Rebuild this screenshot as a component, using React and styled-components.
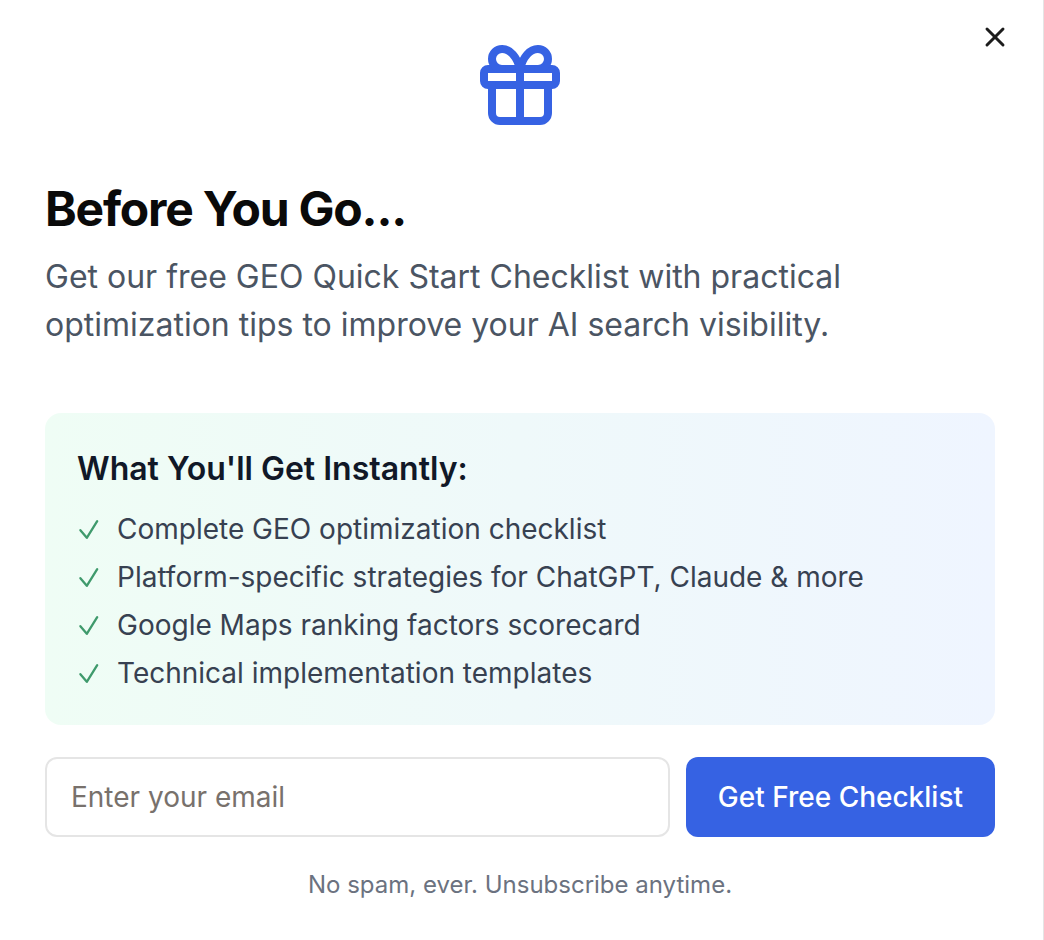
import React from "react";
import styled, { createGlobalStyle } from "styled-components";
import { Gift, X } from "lucide-react";

const GlobalStyle = createGlobalStyle`
  *, *::before, *::after { box-sizing: border-box; }
  body { margin: 0; background: #fff; font-family: Inter, "Liberation Sans", sans-serif; color: #0a0a0a; }
  h2, h3, p, ul { margin: 0; padding: 0; }
`;

const Dialog = styled.main`
  position: relative;
  min-height: 100vh;
  padding: 37px 48px 40px 45px;
  border-right: 1px solid #e5e5e5;
  background: #fff;
`;

const CloseButton = styled.button`
  position: absolute;
  top: 21px;
  right: 32px;
  display: flex;
  padding: 0;
  border: 0;
  background: none;
  color: #1c1c1c;
  cursor: pointer;
`;

const IconRow = styled.div`
  display: flex;
  justify-content: center;
  color: #3662e3;
`;

const Header = styled.header`
  margin-top: 48px;
`;

const Title = styled.h2`
  font-size: 48px;
  line-height: 56px;
  font-weight: 700;
  letter-spacing: -0.025em;
`;

const Description = styled.p`
  max-width: 880px;
  margin-top: 16px;
  font-size: 32px;
  line-height: 48px;
  color: #4b5563;
`;

const Benefits = styled.section`
  margin-top: 64px;
  padding: 32px;
  border-radius: 16px;
  background: linear-gradient(to right, #effdf5, #eff5ff);
`;

const BenefitsTitle = styled.h3`
  font-size: 32px;
  line-height: 48px;
  font-weight: 600;
  color: #111827;
`;

const BenefitList = styled.ul`
  display: grid;
  gap: 8px;
  margin-top: 16px;
  list-style: none;
`;

const Benefit = styled.li`
  display: flex;
  align-items: center;
  gap: 16px;
  font-size: 28px;
  line-height: 40px;
  color: #374151;
`;

const CheckIcon = styled.svg`
  flex: none;
  width: 24px;
  height: 24px;
  fill: none;
  stroke: #3f9a6c;
  stroke-width: 2.3;
  stroke-linecap: round;
  stroke-linejoin: round;
`;

const Form = styled.form`
  display: flex;
  gap: 16px;
  margin-top: 32px;
`;

const EmailInput = styled.input`
  flex: 1;
  min-width: 0;
  height: 80px;
  padding: 0 24px;
  border: 2px solid #e5e5e5;
  border-radius: 12px;
  background: #fff;
  font: 28px/40px Inter, sans-serif;
  &::placeholder { color: #78716c; opacity: 1; }
`;

const SubmitButton = styled.button`
  height: 80px;
  padding: 0 32px;
  border: 0;
  border-radius: 12px;
  background: #3662e3;
  color: #fff;
  font: 500 28px/40px Inter, sans-serif;
  cursor: pointer;
`;

const Note = styled.p`
  margin-top: 32px;
  font-size: 24px;
  line-height: 32px;
  text-align: center;
  color: #6b7280;
`;

const benefits = [
  "Complete GEO optimization checklist",
  "Platform-specific strategies for ChatGPT, Claude & more",
  "Google Maps ranking factors scorecard",
  "Technical implementation templates",
];

export default function App() {
  return (
    <>
      <GlobalStyle />
      <Dialog>
        <CloseButton type="button" aria-label="Close"><X size={32} strokeWidth={2.2} /></CloseButton>
        <IconRow><Gift size={96} /></IconRow>
        <Header>
          <Title>Before You Go...</Title>
          <Description>
            Get our free GEO Quick Start Checklist with practical optimization tips to improve your AI search visibility.
          </Description>
        </Header>
        <Benefits>
          <BenefitsTitle>What You'll Get Instantly:</BenefitsTitle>
          <BenefitList>
            {benefits.map((text) => (
              <Benefit key={text}>
                <CheckIcon viewBox="0 0 24 24" aria-hidden="true">
                  <path d="M3.4 13.2 9.8 20.8 20.2 4.2" />
                </CheckIcon>
                {text}
              </Benefit>
            ))}
          </BenefitList>
        </Benefits>
        <Form onSubmit={(event) => event.preventDefault()}>
          <EmailInput type="email" placeholder="Enter your email" aria-label="Email address" />
          <SubmitButton type="submit">Get Free Checklist</SubmitButton>
        </Form>
        <Note>No spam, ever. Unsubscribe anytime.</Note>
      </Dialog>
    </>
  );
}
